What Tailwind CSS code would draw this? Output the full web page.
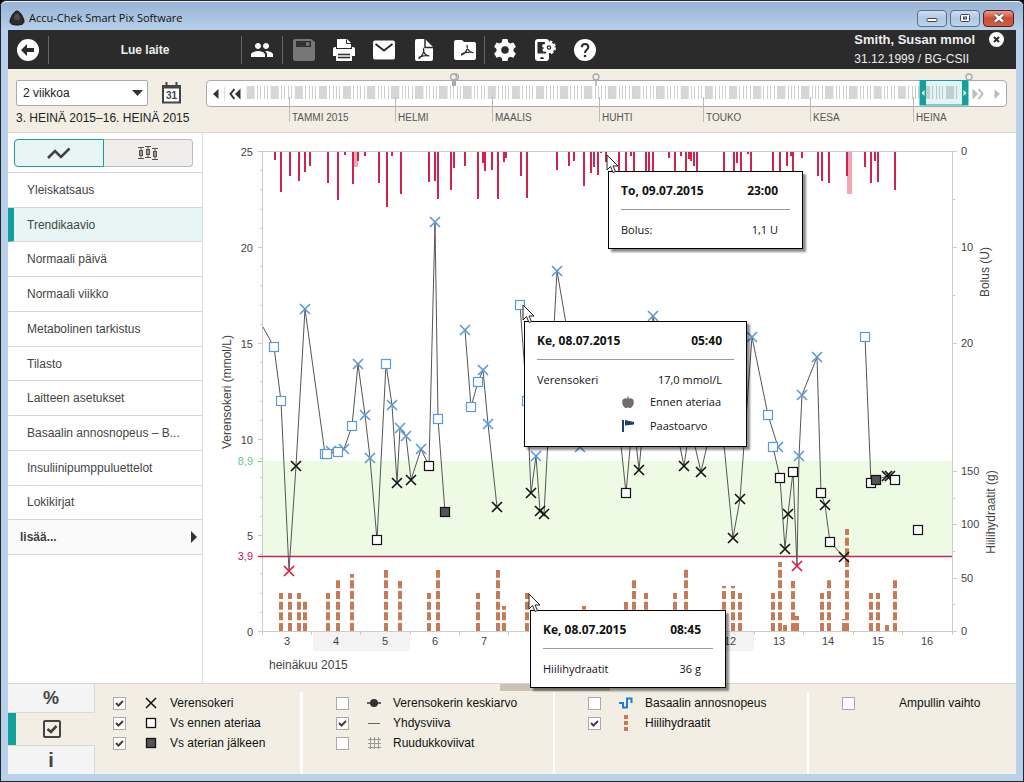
<!DOCTYPE html>
<html lang="fi">
<head>
  <meta charset="UTF-8">
  <meta name="viewport" content="width=device-width, initial-scale=1.0">
  <title>Accu-Chek Smart Pix Software</title>
  <script src="https://cdn.jsdelivr.net/npm/@tailwindcss/browser@4"></script>
</head>
<body class="bg-black font-['Liberation_Sans',Arial,sans-serif] text-xs text-[#444]">

  <div class="flex h-screen flex-col overflow-hidden rounded-t-md border border-[#20262c] bg-[#b9d1ea] px-[7px] pb-[7px]">

    <!-- Otsikkopalkki -->
    <header class="-mx-[7px] flex h-[29px] shrink-0 items-center rounded-t-md border-t border-white/70 bg-linear-to-b from-[#98b4d3] to-[#b7d0ea] pl-2">
      <svg class="mt-1 h-4 w-4" viewBox="0 0 16 16"><path d="M8 1C11 1 15 8 15 11.500C15 14 12 15 8 15S1 14 1 11.500C1 8 5 1 8 1Z" fill="#2c2c2c" stroke="#111"/><path d="M8 3.500c2 0 3 3 3 5s-6 2-6 0 1-5 3-5Z" fill="#4d4d4d"/></svg>
      <h1 class="mt-1 ml-1 flex-1 font-['Open_Sans','Noto_Sans',sans-serif] text-[11px] text-[#111]">Accu-Chek Smart Pix Software</h1>
      <div class="mt-1 mr-[9px] flex gap-[3px]">
        <button aria-label="Pienennä" class="flex h-[17px] w-[30px] items-center justify-center rounded-sm border border-[#56708f] bg-linear-to-b from-[#cfdff0] via-[#b0c8e2] to-[#bfd5ec]"><svg class="h-3 w-4" viewBox="0 0 16 12"><rect x="3" y="6.500" width="10" height="3" rx="1" fill="#fff" stroke="#445"/></svg></button>
        <button aria-label="Suurenna" class="flex h-[17px] w-[30px] items-center justify-center rounded-sm border border-[#56708f] bg-linear-to-b from-[#cfdff0] via-[#b0c8e2] to-[#bfd5ec]"><svg class="h-3 w-4" viewBox="0 0 16 12"><rect x="3.500" y="2.500" width="9" height="7" rx="1" fill="#fff" stroke="#445"/><rect x="6.500" y="5" width="3" height="2" fill="#9bc" stroke="#445"/></svg></button>
        <button aria-label="Sulje" class="flex h-[17px] w-[31px] items-center justify-center rounded-sm border border-[#5a1c1c] bg-linear-to-b from-[#e39a8c] via-[#cc4b3a] to-[#d0603f]"><svg class="h-3 w-4" viewBox="0 0 16 12"><path d="M4 2.500L12 9.500M12 2.500L4 9.500" stroke="#444" stroke-width="4"/><path d="M4 2.500L12 9.500M12 2.500L4 9.500" stroke="#fff" stroke-width="2.500"/></svg></button>
      </div>
    </header>

    <!-- Työkalurivi -->
    <div class="flex h-[39px] shrink-0 items-center bg-[#2b2b2b] text-white">
      <button aria-label="Takaisin" class="flex w-10 justify-center"><svg class="h-[22px] w-[22px]" viewBox="0 0 22 22"><circle cx="11" cy="11" r="11" fill="#fff"/><path d="M4 11L10 5V9H17V13H10V17Z" fill="#2b2b2b"/></svg></button>
      <button class="h-7 w-[193px] border-l border-[#666] text-xs font-bold text-[#eee]">Lue laite</button>
      <button aria-label="Potilaat" class="flex h-7 w-[41px] items-center justify-center border-l border-[#666]"><svg class="h-6 w-6" viewBox="0 0 24 24" fill="#fff"><path d="M16 11c1.660 0 3-1.340 3-3s-1.340-3-3-3-3 1.340-3 3 1.340 3 3 3zM8 11c1.660 0 3-1.340 3-3S9.660 5 8 5 5 6.340 5 8s1.340 3 3 3zM8 13c-2.330 0-7 1.170-7 3.500V19h14v-2.500C15 14.170 10.330 13 8 13zM16 13l-1 .050c1.200.850 2 2 2 3.450V19h6v-2.500C23 14.170 18.330 13 16 13z"/></svg></button>
      <div class="flex h-7 items-center border-x border-[#666]">
        <button aria-label="Tallenna" disabled class="flex w-10 justify-center pl-[2px]"><svg class="h-6 w-6" viewBox="0 0 24 24"><path d="M1 3a2 2 0 0 1 2-2H19L23 4V21a2 2 0 0 1-2 2H3a2 2 0 0 1-2-2Z" fill="#777"/><path d="M4 3H19V9H4Z" fill="#2b2b2b"/><path d="M5.500 4.200H17.500V7.800H5.500Z" fill="#777"/><path d="M5.500 4.200H14V7.800H5.500Z" fill="#2b2b2b"/></svg></button>
        <button aria-label="Tulosta" class="flex w-10 justify-center pl-[2px]"><svg class="h-6 w-6" viewBox="0 0 24 24"><path d="M5 10V1H15L19 5V10Z" fill="#fff"/><path d="M14.500 1.500V5.500H19" fill="none" stroke="#2b2b2b"/><path d="M1 11a2 2 0 0 1 2-2H4V11H20V9H21a2 2 0 0 1 2 2V18H20V23H4V18H1Z" fill="#fff"/><path d="M6 16.500H18M6 19.500H18" stroke="#2b2b2b" stroke-width="1.300"/></svg></button>
        <button aria-label="Sähköposti" class="flex w-10 justify-center pl-[2px]"><svg class="h-6 w-6" viewBox="0 0 24 24"><rect x="1" y="2.500" width="22" height="19" rx="2" fill="#fff"/><path d="M3.500 6L12 12.500L20.500 6" fill="none" stroke="#2b2b2b" stroke-width="1.800"/></svg></button>
        <button aria-label="PDF" class="flex w-10 justify-center pl-[2px]"><svg class="h-6 w-6" viewBox="0 0 24 24"><path d="M3 3a2 2 0 0 1 2-2H13L21 9V21a2 2 0 0 1-2 2H5a2 2 0 0 1-2-2Z" fill="#fff"/><path d="M13 1V9.500H21" fill="none" stroke="#2b2b2b" stroke-width="1.500"/><path d="M11.500 11C12.800 13 10 18.500 7 20.500C6 19 10.500 17 17.500 18C14 18 11 15 11.500 11Z" fill="none" stroke="#2b2b2b" stroke-width="1.200"/></svg></button>
        <button aria-label="PDF-kansio" class="flex w-[41px] justify-center pl-[2px]"><svg class="h-6 w-6" viewBox="0 0 24 24"><path d="M1 4a2 2 0 0 1 2-2H9L11 4H21a2 2 0 0 1 2 2V20a2 2 0 0 1-2 2H3a2 2 0 0 1-2-2Z" fill="#fff"/><path d="M14 7C15.500 11 12 16 8.500 17C8 15.500 13 13.500 20.500 14.500C17 15 13.500 11 14 7Z" fill="none" stroke="#2b2b2b" stroke-width="1.200"/></svg></button>
      </div>
      <button aria-label="Asetukset" class="flex w-10 justify-center"><svg class="h-6 w-6" viewBox="0 0 24 24"><path d="M9.500 1H14.500L15.200 4.200L17.300 5.400L20.400 4.400L22.900 8.700L20.500 10.900V13.300L22.900 15.400L20.400 19.700L17.300 18.700L15.200 19.900L14.500 23H9.500L8.800 19.900L6.700 18.700L3.600 19.700L1.100 15.400L3.500 13.200V10.900L1.100 8.700L3.600 4.400L6.700 5.400L8.800 4.200Z" fill="#fff"/><circle cx="12" cy="12" r="3.800" fill="#2b2b2b"/></svg></button>
      <button aria-label="Laitteen asetukset" class="flex w-10 justify-center"><svg class="h-6 w-6" viewBox="0 0 24 24"><rect x="2" y="1" width="14" height="22" rx="3" fill="#fff"/><rect x="4.500" y="4" width="11.500" height="11.500" fill="#2b2b2b"/><path d="M7 21a2 2 0 0 1 4 0Z" fill="#2b2b2b"/><circle cx="16" cy="9.500" r="4" fill="none" stroke="#fff" stroke-width="3.400"/><circle cx="16" cy="9.500" r="6" fill="none" stroke="#fff" stroke-width="2" stroke-dasharray="2.700 2"/><circle cx="16" cy="9.500" r="1" fill="#fff"/></svg></button>
      <button aria-label="Ohje" class="flex w-10 justify-center"><svg class="h-[22px] w-[22px]" viewBox="0 0 22 22"><circle cx="11" cy="11" r="11" fill="#fff"/><path d="M7.800 8.300C7.800 4 14.300 4 14.300 8.300C14.300 11 11 10.600 11 14" fill="none" stroke="#2b2b2b" stroke-width="2"/><circle cx="11" cy="17" r="1.300" fill="#2b2b2b"/></svg></button>
      <div class="ml-auto flex h-full items-start">
        <div class="leading-[18px]">
          <p class="text-[13px] leading-[20px] font-bold text-[#eee]">Smith, Susan mmol</p>
          <p class="text-[#eee]">31.12.1999 / BG-CSII</p>
        </div>
        <button aria-label="Sulje potilas" class="mt-[2px] mr-3 ml-[14px]"><svg class="h-[15px] w-[15px]" viewBox="0 0 15 15"><circle cx="7.500" cy="7.500" r="7.500" fill="#fff"/><path d="M5 5L10 10M10 5L5 10" stroke="#2b2b2b" stroke-width="2"/></svg></button>
      </div>
    </div>

    <!-- Aikavälin valinta -->
    <div class="flex h-[64px] shrink-0 border-b border-[#dcd8cd] bg-[#f2eee3] pt-[11px] pr-[9px] pl-2">
      <div class="w-[190px]">
        <div class="flex items-center">
          <div class="relative">
            <select aria-label="Aikaväli" class="h-[26px] w-[132px] appearance-none rounded-xs border border-[#aaa] bg-white pl-[6px] text-xs text-[#222]"><option>2 viikkoa</option></select>
            <svg class="pointer-events-none absolute top-[10px] right-[5px] h-[6px] w-[11px]" viewBox="0 0 11 6"><path d="M0 0H11L5.500 6Z" fill="#333"/></svg>
          </div>
          <button aria-label="Kalenteri" class="ml-[13px]"><svg class="h-[22px] w-[21px]" viewBox="0 0 21 22"><path d="M2 4H19V20.500H2Z" fill="#fff" stroke="#444" stroke-width="2"/><path d="M1 3H20V6.500H1Z" fill="#444"/><path d="M5.500 0V4M15.500 0V4" stroke="#444" stroke-width="2"/><text x="10.500" y="17" text-anchor="middle" font-size="10" font-weight="bold" fill="#444">31</text></svg></button>
        </div>
        <p class="mt-1 whitespace-nowrap text-xs leading-4 text-[#222]">3. HEINÄ 2015–16. HEINÄ 2015</p>
      </div>
      <div class="flex h-[27px] flex-1 items-center rounded-sm border border-[#a9a9a9] bg-white">
        <button aria-label="Edellinen" class="flex w-[18px] justify-center border-r border-[#ddd]"><svg class="h-[14px] w-[7px]" viewBox="0 0 7 14"><path d="M6.500 2V12L1 7Z" fill="#333"/></svg></button>
        <button aria-label="Alkuun" class="flex w-5 justify-center"><svg class="h-[14px] w-3" viewBox="0 0 12 14"><path d="M5.500 2L1.500 7L5.500 12" fill="none" stroke="#333" stroke-width="2"/><path d="M11.500 1.500V12.500L6 7Z" fill="#333"/></svg></button>
        <svg id="timeline" class="h-[25px] min-w-0 flex-1 overflow-visible" viewBox="245 81 723 25"></svg>
        <button aria-label="Loppuun" disabled class="flex w-5 justify-center"><svg class="h-[14px] w-3" viewBox="0 0 12 14"><path d="M6.500 2L10.500 7L6.500 12" fill="none" stroke="#bbb" stroke-width="2"/><path d="M0.500 1.500V12.500L6 7Z" fill="#bbb"/></svg></button>
        <button aria-label="Seuraava" disabled class="flex w-[18px] justify-center"><svg class="h-[14px] w-[7px]" viewBox="0 0 7 14"><path d="M0.500 2V12L6 7Z" fill="#bbb"/></svg></button>
      </div>
    </div>

    <div class="flex min-h-0 flex-1 bg-white">
      <!-- Sivuvalikko -->
      <aside class="w-[195px] shrink-0 border-r border-[#ddd]">
        <div class="mt-[6px] mb-[5px] ml-[6px] flex h-7 w-[179px]">
          <button aria-label="Viivakaavio" class="flex flex-1 items-center justify-center rounded-l-sm border border-[#1a9d95] bg-[#e7f6f4]"><svg class="h-3 w-6" viewBox="0 0 24 12"><path d="M1 11L8 4L14 10L22.500 1.500" fill="none" stroke="#444" stroke-width="2.600"/></svg></button>
          <button aria-label="Laatikkokaavio" class="flex flex-1 items-center justify-center rounded-r-sm border border-l-0 border-[#bbb] bg-[#f1edea]"><svg class="h-[14px] w-5" viewBox="0 0 20 14" stroke="#555" fill="#999"><path d="M0 1.500H6M0 12.500H6M3 1.500V12.500M7 .500H13M7 11.500H13M10 .500V11.500M14 2.500H20M14 13.500H20M17 2.500V13.500"/><rect x="1.500" y="4.500" width="3" height="5"/><rect x="8.500" y="3.500" width="3" height="5"/><rect x="15.500" y="5.500" width="3" height="5"/></svg></button>
        </div>
        <nav class="flex h-[383px] flex-col border-t border-[#d8d8d8]">
          <a href="#" class="flex flex-1 items-center border-b border-[#d8d8d8] pl-[19px]">Yleiskatsaus</a>
          <a href="#" aria-current="page" class="flex flex-1 items-center border-b border-l-6 border-b-[#d8d8d8] border-l-[#12a19a] bg-[#e7f6f4] pl-[13px]">Trendikaavio</a>
          <a href="#" class="flex flex-1 items-center border-b border-[#d8d8d8] pl-[19px]">Normaali päivä</a>
          <a href="#" class="flex flex-1 items-center border-b border-[#d8d8d8] pl-[19px]">Normaali viikko</a>
          <a href="#" class="flex flex-1 items-center border-b border-[#d8d8d8] pl-[19px]">Metabolinen tarkistus</a>
          <a href="#" class="flex flex-1 items-center border-b border-[#d8d8d8] pl-[19px]">Tilasto</a>
          <a href="#" class="flex flex-1 items-center border-b border-[#d8d8d8] pl-[19px]">Laitteen asetukset</a>
          <a href="#" class="flex flex-1 items-center border-b border-[#d8d8d8] pl-[19px]">Basaalin annosnopeus – B...</a>
          <a href="#" class="flex flex-1 items-center border-b border-[#d8d8d8] pl-[19px]">Insuliinipumppuluettelot</a>
          <a href="#" class="flex flex-1 items-center border-b border-[#d8d8d8] pl-[19px]">Lokikirjat</a>
          <a href="#" class="flex flex-1 items-center justify-between border-b border-[#d8d8d8] bg-[#fafafa] pr-[5px] pl-3 font-bold">lisää...<svg class="h-3 w-[6px]" viewBox="0 0 6 12"><path d="M0 0V12L6 6Z" fill="#333"/></svg></a>
        </nav>
      </aside>

      <!-- Trendikaavio -->
      <main class="relative min-w-0 flex-1">
        <svg id="chart" class="h-full w-full" viewBox="203 133 813 550"></svg>

        <section class="absolute top-[38px] left-[405px] h-[78px] w-[195px] border border-black bg-white px-3 pt-[11px] font-['Open_Sans','Noto_Sans',sans-serif] text-[11px] leading-[18px] text-[#111] shadow-[3px_3px_2px_rgba(0,0,0,0.45)]">
          <div class="flex justify-between border-b border-[#999] pr-3 pb-[10px] text-xs font-bold"><span>To, 09.07.2015</span><span>23:00</span></div>
          <div class="mt-[11px] flex justify-between pr-3"><span>Bolus:</span><span>1,1 U</span></div>
        </section>

        <section class="absolute top-[188px] left-[321px] h-[126px] w-[223px] border border-black bg-white px-3 pt-[11px] font-['Open_Sans','Noto_Sans',sans-serif] text-[11px] leading-[18px] text-[#111] shadow-[3px_3px_2px_rgba(0,0,0,0.45)]">
          <div class="flex justify-between border-b border-[#999] pr-3 pb-[10px] text-xs font-bold"><span>Ke, 08.07.2015</span><span>05:40</span></div>
          <div class="mt-[11px] flex justify-between pr-3"><span>Verensokeri</span><span>17,0 mmol/L</span></div>
          <div class="mt-1 flex items-center gap-4 pl-[85px]"><svg class="h-3 w-3" viewBox="0 0 12 12"><path d="M6 3C7.500 1.800 11.800 1.800 11.800 6C11.800 9.500 9.500 12 8 12C7 12 7 11.500 6 11.500S5 12 4 12C2.500 12 .200 9.500.200 6C.200 1.800 4.500 1.800 6 3Z" fill="#746c70"/><path d="M6 3V0.500" stroke="#746c70" stroke-width="1.300"/></svg><span>Ennen ateriaa</span></div>
          <div class="mt-[6px] flex items-center gap-4 pl-[85px]"><svg class="h-3 w-3" viewBox="0 0 12 12"><path d="M1 0V12" stroke="#1d4270" stroke-width="2"/><path d="M3 0L12 2V4.500L3 5.500Z" fill="#1d4270"/></svg><span>Paastoarvo</span></div>
        </section>

        <section class="absolute top-[477px] left-[327px] z-10 h-[78px] w-[196px] border border-black bg-white px-3 pt-[11px] font-['Open_Sans','Noto_Sans',sans-serif] text-[11px] leading-[18px] text-[#111] shadow-[3px_3px_2px_rgba(0,0,0,0.45)]">
          <div class="flex justify-between border-b border-[#999] pr-3 pb-[10px] text-xs font-bold"><span>Ke, 08.07.2015</span><span>08:45</span></div>
          <div class="mt-[11px] flex justify-between pr-3"><span>Hiilihydraatit</span><span>36 g</span></div>
        </section>

        <!-- Osoittimet -->
        <svg class="absolute top-[21px] left-[403px] h-5 w-[14px]" viewBox="0 0 14 20"><path d="M1 1V16L4.500 12.500L7 18.500L9.500 17.500L7 12H12Z" fill="#fff" stroke="#222"/></svg>
        <svg class="absolute top-[171px] left-[319px] h-5 w-[14px]" viewBox="0 0 14 20"><path d="M1 1V16L4.500 12.500L7 18.500L9.500 17.500L7 12H12Z" fill="#fff" stroke="#222"/></svg>
        <svg class="absolute top-[460px] left-[325px] z-20 h-5 w-[14px]" viewBox="0 0 14 20"><path d="M1 1V16L4.500 12.500L7 18.500L9.500 17.500L7 12H12Z" fill="#fff" stroke="#222"/></svg>
      </main>
    </div>

    <!-- Selite -->
    <footer class="relative flex h-[91px] shrink-0 border-t border-[#dcd8cd] bg-[#f2eee3] text-[#111]">
      <div class="absolute top-0 left-[492px] h-[7px] w-[110px] bg-[#c9c3b5]"></div>
      <div class="flex w-[87px] flex-col">
        <button class="h-[29px] border-r border-b border-[#dcd8cd] bg-[#f4f4f4] text-lg leading-none font-bold text-[#444]">%</button>
        <button aria-label="Valinnat" class="flex h-8 items-center justify-center border-l-8 border-[#12a19a] pr-2"><svg class="h-[18px] w-[18px]" viewBox="0 0 18 18"><rect x="1" y="1" width="16" height="16" rx="1" fill="none" stroke="#444" stroke-width="2"/><path d="M4.500 9L8 12L13.500 6" fill="none" stroke="#444" stroke-width="2.600"/></svg></button>
        <button class="h-[29px] border-t border-r border-[#dcd8cd] bg-[#f4f4f4] text-xl leading-none font-bold text-[#444]">i</button>
      </div>
      <div class="mt-2 w-[208px] border-r-3 border-white pt-px pl-[18px]">
        <label class="flex h-5 items-center"><input type="checkbox" checked class="peer h-[13px] w-[13px] appearance-none border border-[#aaa] bg-white"><svg class="pointer-events-none invisible -ml-[11px] h-[9px] w-[9px] peer-checked:visible" viewBox="0 0 9 9"><path d="M1 4L3.500 6.500L8 2" fill="none" stroke="#4d3a3d" stroke-width="2"/></svg><svg class="mr-[13px] ml-[21px] h-3 w-3" viewBox="0 0 12 12"><path d="M1 1L11 11M11 1L1 11" stroke="#111" stroke-width="1.500"/></svg>Verensokeri</label>
        <label class="flex h-5 items-center"><input type="checkbox" checked class="peer h-[13px] w-[13px] appearance-none border border-[#aaa] bg-white"><svg class="pointer-events-none invisible -ml-[11px] h-[9px] w-[9px] peer-checked:visible" viewBox="0 0 9 9"><path d="M1 4L3.500 6.500L8 2" fill="none" stroke="#4d3a3d" stroke-width="2"/></svg><svg class="mr-[13px] ml-[21px] h-3 w-3" viewBox="0 0 12 12"><rect x="1.500" y="1.500" width="9" height="9" fill="#fff" stroke="#111" stroke-width="1.300"/></svg>Vs ennen ateriaa</label>
        <label class="flex h-5 items-center"><input type="checkbox" checked class="peer h-[13px] w-[13px] appearance-none border border-[#aaa] bg-white"><svg class="pointer-events-none invisible -ml-[11px] h-[9px] w-[9px] peer-checked:visible" viewBox="0 0 9 9"><path d="M1 4L3.500 6.500L8 2" fill="none" stroke="#4d3a3d" stroke-width="2"/></svg><svg class="mr-[13px] ml-[21px] h-3 w-3" viewBox="0 0 12 12"><rect x="1.500" y="1.500" width="9" height="9" fill="#555" stroke="#111" stroke-width="1.300"/></svg>Vs aterian jälkeen</label>
      </div>
      <div class="mt-2 w-[252px] border-r-2 border-white pt-px pl-[33px]">
        <label class="flex h-5 items-center"><input type="checkbox" class="h-[13px] w-[13px] appearance-none border border-[#aaa] bg-white"><svg class="mr-3 ml-[18px] h-3 w-[14px]" viewBox="0 0 14 12"><path d="M0 6H14" stroke="#333" stroke-width="1.500"/><circle cx="7" cy="6" r="4" fill="#333"/></svg>Verensokerin keskiarvo</label>
        <label class="flex h-5 items-center"><input type="checkbox" checked class="peer h-[13px] w-[13px] appearance-none border border-[#aaa] bg-white"><svg class="pointer-events-none invisible -ml-[11px] h-[9px] w-[9px] peer-checked:visible" viewBox="0 0 9 9"><path d="M1 4L3.500 6.500L8 2" fill="none" stroke="#4d3a3d" stroke-width="2"/></svg><svg class="mr-3 ml-[20px] h-3 w-[14px]" viewBox="0 0 14 12"><path d="M1 6.500H13" stroke="#666"/></svg>Yhdysviiva</label>
        <label class="flex h-5 items-center"><input type="checkbox" class="h-[13px] w-[13px] appearance-none border border-[#aaa] bg-white"><svg class="mr-3 ml-[18px] h-3 w-[14px]" viewBox="0 0 14 12"><path d="M1 2.500H14M1 6.500H14M1 10.500H14M3.500 0V12M7.500 0V12M11.500 0V12" stroke="#999"/></svg>Ruudukkoviivat</label>
      </div>
      <div class="mt-2 w-[254px] border-r-2 border-white pt-px pl-[33px]">
        <label class="flex h-5 items-center"><input type="checkbox" class="h-[13px] w-[13px] appearance-none border border-[#aaa] bg-white"><svg class="mr-3 ml-[18px] h-3 w-[14px]" viewBox="0 0 14 12"><path d="M0 6H4V10.500H8V1.500H12.500V6" fill="none" stroke="#1b7fdb" stroke-width="2"/></svg>Basaalin annosnopeus</label>
        <label class="flex h-5 items-center"><input type="checkbox" checked class="peer h-[13px] w-[13px] appearance-none border border-[#aaa] bg-white"><svg class="pointer-events-none invisible -ml-[11px] h-[9px] w-[9px] peer-checked:visible" viewBox="0 0 9 9"><path d="M1 4L3.500 6.500L8 2" fill="none" stroke="#4d3a3d" stroke-width="2"/></svg><svg class="mr-3 ml-[20px] h-4 w-[14px]" viewBox="0 0 14 16"><path d="M7 0V16" stroke="#c67b58" stroke-width="4" stroke-dasharray="4 2"/></svg>Hiilihydraatit</label>
      </div>
      <div class="mt-2 pt-px pl-[33px]">
        <label class="flex h-5 items-center gap-11"><input type="checkbox" class="h-[13px] w-[13px] appearance-none border border-[#aaa] bg-white">Ampullin vaihto</label>
      </div>
    </footer>
  </div>

  <script>
    // Verensokerimittaukset: [x, y, merkki]
    // x = rasti, s = neliö, f = täytetty neliö; b = sininen (korkea), k = musta, r = punainen (matala), - = ei merkkiä
    const jaksot = [
      [[263,327,"-"],[274,347,"sb"],[281,401,"sb"],[289,571,"xr"],[296,466,"xk"],[305,309,"xb"],[325,454,"sb"],[331,451,"xb"],[327,454,"sb"],[344,449,"xb"],[338,452,"sb"],[344,449,"-"],[352,426,"sb"],[358,364,"xb"],[365,415,"xb"],[370,458,"xb"],[377,540,"sk"],[386,364,"sb"],[392,405,"xb"],[397,483,"xk"],[400,428,"xb"],[406,436,"xb"],[411,480,"xk"],[421,449,"xb"],[429,466,"sk"],[435,222,"xb"],[438,419,"sb"],[445,512,"fk"]],
      [[465,330,"xb"],[471,407,"sb"],[478,382,"sb"],[483,370,"xb"],[488,424,"xb"],[497,507,"xk"]],
      [[520,305,"sb"],[527,401,"sb"],[531,493,"xk"],[536,456,"xb"],[540,511,"xk"],[544,514,"xk"],[557,271,"xb"],[574,370,"-"],[580,447,"xb"],[610,340,"-"],[626,493,"sk"],[633,415,"-"],[639,470,"xk"],[653,316,"xb"],[684,466,"xk"],[690,425,"-"],[701,472,"xk"],[719,393,"-"],[733,538,"xk"],[740,499,"xk"],[752,337,"xb"],[768,415,"sb"],[778,447,"xb"],[773,447,"sb"],[780,478,"sk"],[785,549,"xk"],[788,514,"xk"],[793,472,"sk"],[797,566,"xr"],[799,456,"xb"],[802,395,"xb"],[817,357,"xb"],[821,493,"sk"],[825,505,"xk"],[830,542,"sk"],[844,557,"xk"]],
      [[865,337,"sb"],[871,483,"sk"],[876,480,"fk"],[887,476,"xk"],[890,476,"xk"],[895,480,"sk"]],
      [[918,530,"sk"]]
    ];

    // Bolukset: [x, alareuna]
    const bolukset = [[275,160],[281,192],[290,176],[299,181],[305,172],[310,166],[328,183],[338,200],[345,155],[353,184],[358,161],[365,156],[379,183],[387,207],[392,156],[401,194],[429,182],[435,181],[438,199],[451,190],[454,168],[465,166],[478,199],[483,163],[485,171],[492,170],[498,199],[504,162],[506,158],[521,176],[527,198],[557,170],[569,166],[574,161],[584,186],[591,173],[594,167],[598,175],[601,153],[606,162],[619,180],[626,180],[631,156],[634,180],[646,180],[649,180],[653,180],[669,158],[675,180],[681,156],[686,180],[689,159],[691,161],[694,166],[697,180],[724,180],[734,180],[737,163],[741,180],[748,154],[751,180],[773,180],[780,180],[787,166],[791,156],[793,180],[802,158],[818,176],[822,181],[829,183],[847,176],[865,167],[871,183],[875,161],[878,182],[895,190]];

    // Hiilihydraatit: [x, yläreuna]
    const hiilarit = [[281,593],[290,593],[299,593],[305,601],[328,593],[338,580],[352,574],[386,570],[400,581],[429,593],[438,570],[478,593],[498,570],[504,606],[527,593],[584,606],[626,602],[634,580],[646,593],[675,593],[686,569],[724,586],[733,586],[740,593],[773,593],[780,562],[785,625],[793,581],[797,616],[822,593],[829,580],[844,619],[847,529],[871,593],[878,593],[887,625],[895,580]];

    const varit = { b: "#5b9bd5", k: "#111", r: "#e5173f" };
    const viiva = (x1, y1, x2, y2, c, w = 1) => `<path d="M${x1} ${y1}L${x2} ${y2}" stroke="${c}" stroke-width="${w}"/>`;
    const teksti = (x, y, t, c = "#444", a = "middle", koko = 11) => `<text x="${x}" y="${y}" fill="${c}" text-anchor="${a}" font-size="${koko}">${t}</text>`;

    function merkki([x, y, m]) {
      const c = varit[m[1]];
      if (m[0] === "x") return `<path d="M${x - 5} ${y - 5}l10 10m0-10l-10 10" stroke="${c}" stroke-width="1.6" fill="none"/>`;
      if (m[0] === "s") return `<rect x="${x - 4.5}" y="${y - 4.5}" width="9" height="9" fill="#fff" stroke="${c}" stroke-width="1.2"/>`;
      if (m[0] === "f") return `<rect x="${x - 4.5}" y="${y - 4.5}" width="9" height="9" fill="#555" stroke="#111" stroke-width="1.2"/>`;
      return "";
    }

    function piirraKaavio() {
      const paiva = 689 / 14;
      let s = `<rect x="263" y="461" width="689" height="95" fill="#edfbe5"/>`;

      // Viikonloput
      s += `<rect x="313" y="632" width="97" height="19" fill="#f3f3f3"/><rect x="657" y="632" width="97" height="19" fill="#f3f3f3"/>`;

      // Akselit
      s += viiva(258, 151.5, 957, 151.5, "#ccc") + viiva(258, 631.5, 957, 631.5, "#ccc");
      s += viiva(262.5, 152, 262.5, 635, "#ccc") + viiva(952.5, 152, 952.5, 635, "#ccc");
      for (let i = 0; i <= 25; i++) {
        const y = Math.round(631 - i * 19.2) + 0.5;
        s += viiva(i % 5 ? 260 : 258, y, 262, y, "#ccc");
        if (i % 5 === 0) s += teksti(253, y + 4, i, "#444", "end");
      }
      [[151,0],[247,10],[343,20],[471,150],[524,100],[578,50],[631,0]].forEach(([y, t]) => {
        s += viiva(952, y + 0.5, 957, y + 0.5, "#ccc") + teksti(961, y + 4, t, "#444", "start");
      });
      [199, 295, 498, 551, 604].forEach(y => s += viiva(952, y + 0.5, 955, y + 0.5, "#ccc"));
      for (let i = 0; i < 14; i++) {
        const x = Math.round(263 + i * paiva) - 0.5;
        s += viiva(x, 632, x, 635, "#ccc") + teksti(Math.round(x + paiva / 2), 645, i + 3);
      }
      s += teksti(253, 465, "8,9", "#5fc98d", "end") + teksti(253, 560, "3,9", "#d0164a", "end");
      s += viiva(258, 461.5, 262, 461.5, "#5fc98d");
      s += teksti(269, 669, "heinäkuu 2015", "#444", "start", 12);
      [[231,392,"Verensokeri (mmol/L)"],[989,272,"Bolus (U)"],[995,512,"Hiilihydraatit (g)"]].forEach(([x, y, t]) => {
        s += `<text transform="translate(${x} ${y}) rotate(-90)" text-anchor="middle" font-size="12" fill="#444">${t}</text>`;
      });

      // Bolukset ja hiilihydraatit
      s += `<rect x="354" y="152" width="4" height="15" fill="#f6a5b8"/><rect x="847" y="152" width="5" height="42" fill="#f6a5b8"/>`;
      bolukset.forEach(([x, y]) => s += viiva(x, 152, x, y, "#d0234f", 2));
      hiilarit.forEach(([x, y]) => s += `<path d="M${x} 631V${y}" stroke="#c67b58" stroke-width="4" stroke-dasharray="8 2.67"/>`);

      s += viiva(258, 556.5, 952, 556.5, "#c0284f", 1.3);
      jaksot.forEach(j => s += `<polyline points="${j.map(p => p[0] + "," + p[1]).join(" ")}" fill="none" stroke="#555" stroke-width="1"/>`);
      jaksot.flat().forEach(p => s += merkki(p));
      document.getElementById("chart").innerHTML = s;
    }

    function piirraAikajana() {
      let s = "";
      for (let k = 0; k < 30; k++) {
        const x = 246.6 + k * 24.12;
        if (x > 958) break;
        s += `<rect x="${x}" y="86" width="8" height="13" fill="#d6d6d6"/>`;
        for (let i = 0; i < 5; i++) {
          const lx = Math.round(x + 10.3 + i * 3.4);
          if (lx < 958) s += viiva(lx + 0.5, 86, lx + 0.5, 99, "#cfcfcf");
        }
      }
      [[289,"TAMMI 2015"],[395,"HELMI"],[492,"MAALIS"],[599,"HUHTI"],[703,"TOUKO"],[810,"KESA"],[913,"HEINA"]].forEach(([x, t]) => {
        s += viiva(x + 0.5, 97, x + 0.5, 122, "#bbb") + teksti(x + 3, 121, t, "#555", "start", 10);
      });
      // Valittu jakso
      s += `<rect x="920" y="80.5" width="48" height="24.500" fill="#12a19a" fill-opacity=".12" stroke="#12a19a"/>`;
      s += `<rect x="920" y="80" width="6" height="25" fill="#12a19a"/><rect x="962" y="80" width="6" height="25" fill="#12a19a"/>`;
      s += `<path d="M924.500 90V96L921.500 93ZM963.500 90V96L966.500 93Z" fill="#fff"/>`;
      // Merkinnät
      s += viiva(454, 80, 454, 86, "#aaa", 4) + viiva(596, 80, 596, 86, "#aaa", 1.5);
      [455.5, 453.5, 596, 969].forEach(x => s += `<circle cx="${x}" cy="77" r="3" fill="#f2eee3" stroke="#aaa" stroke-width="1.3"/>`);
      document.getElementById("timeline").innerHTML = s;
    }

    piirraKaavio();
    piirraAikajana();
  </script>
</body>
</html>
